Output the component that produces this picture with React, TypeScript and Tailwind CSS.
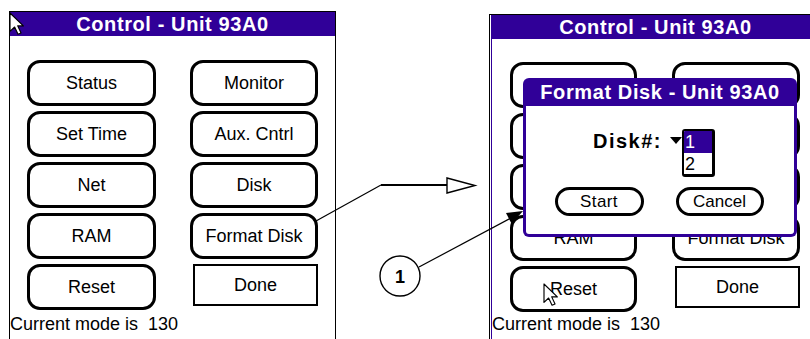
import React from 'react';

const leftLabels = ['Status', 'Set Time', 'Net', 'RAM', 'Reset'];
const rightLabels = ['Monitor', 'Aux. Cntrl', 'Disk', 'Format Disk'];

function PalmButton({ label, hidden }: { label: string; hidden?: boolean }) {
  return (
    <div
      className={`flex h-[46px] items-center justify-center rounded-[13px] border-[3px] border-black text-[18px] leading-none ${
        hidden ? 'text-transparent' : 'text-black'
      }`}
    >
      {label}
    </div>
  );
}

// covered: rows fully under the dialog on the second screen
function ButtonGrid({ wide, covered = 0 }: { wide: boolean; covered?: number }) {
  return (
    <div
      className={
        wide
          ? 'grid grid-cols-[129px_128px] gap-x-[34px] gap-y-[5px] px-[17px] pt-[24px]'
          : 'grid grid-cols-[127px_128px] gap-x-[35px] gap-y-[5px] px-[18px] pt-[23px]'
      }
    >
      {leftLabels.map((label, i) => (
        <React.Fragment key={label}>
          <PalmButton label={label} hidden={i < covered} />
          {i < 4 ? (
            <PalmButton label={rightLabels[i]} hidden={i < covered} />
          ) : (
            <div className="ml-[3px] flex h-[42px] items-center justify-center border-2 border-black text-[18px] leading-none text-black">
              Done
            </div>
          )}
        </React.Fragment>
      ))}
    </div>
  );
}

function TitleBar() {
  return (
    <div className="flex h-[24px] items-center justify-center bg-[#300098] text-[20px] font-bold leading-none tracking-[0.6px] text-white">
      Control - Unit 93A0
    </div>
  );
}

function StatusLine({ offset }: { offset: string }) {
  return <p className={`${offset} whitespace-pre text-[18px] leading-[22px] text-black`}>Current mode is  130</p>;
}

function FormatDialog() {
  return (
    <div className="absolute left-[33px] top-[63px] w-[274px]">
      <div className="flex h-[28px] items-center justify-center rounded-t-[6px] bg-[#300098] text-[20px] font-bold leading-none tracking-[0.6px] text-white">
        Format Disk - Unit 93A0
      </div>
      <div className="rounded-b-[6px] border-[3px] border-t-0 border-[#300098] bg-white pb-[18px] pt-[23px]">
        <div className="flex items-start pl-[67px]">
          <span className="text-[20px] font-bold leading-[24px] tracking-[1.5px] text-black">Disk#:</span>
          <svg className="ml-[8px] mt-[8px]" width="12" height="7" viewBox="0 0 12 7">
            <polygon points="0,0 12,0 6,7" fill="black" />
          </svg>
          <div className="flex h-[48px] w-[33px] flex-col overflow-hidden rounded-[3px] border-2 border-b-[3px] border-r-[3px] border-black text-[18px] leading-none">
            <div className="flex h-[22px] items-center bg-[#300098] pl-[1px] text-white">1</div>
            <div className="flex flex-1 items-center bg-white pl-[1px] text-black">2</div>
          </div>
        </div>
        <div className="mt-[10px] flex justify-center gap-[32px] pr-[2px]">
          <div className="flex h-[29px] w-[89px] items-center justify-center rounded-full border-[3px] border-black text-[17px] leading-none tracking-[0.4px] text-black">
            Start
          </div>
          <div className="flex h-[29px] w-[88px] items-center justify-center rounded-full border-[3px] border-black text-[17px] leading-none text-black">
            Cancel
          </div>
        </div>
      </div>
    </div>
  );
}

function Cursor({ x, y }: { x: number; y: number }) {
  return (
    <path
      transform={`translate(${x} ${y}) scale(1.15)`}
      d="M0 0 V16 L4 12.2 L7 18.5 L9.6 17.4 L6.7 11.2 H11.6 Z"
      fill="white"
      stroke="black"
      strokeWidth="1"
      strokeLinejoin="round"
    />
  );
}

export default function App() {
  return (
    <div
      className="relative flex h-[339px] w-[810px] items-start overflow-hidden bg-white"
      style={{ fontFamily: '"Liberation Sans", Arial, sans-serif' }}
    >
      <div className="ml-[9px] mt-[11px] h-[328px] w-[327px] shrink-0 border-l border-r border-t border-black">
        <TitleBar />
        <ButtonGrid wide />
        <StatusLine offset="mt-[3px] pl-0" />
      </div>

      <div className="relative ml-[153px] mt-[14px] h-[325px] w-[330px] shrink-0 border-l border-t border-black pl-[1px]">
        <div className="h-full border-l border-[#300098]">
          <TitleBar />
          <ButtonGrid wide={false} covered={3} />
          <StatusLine offset="mt-[1px] pl-0" />
        </div>
        <FormatDialog />
      </div>

      <svg className="pointer-events-none absolute left-0 top-0" width="810" height="339" viewBox="0 0 810 339">
        <line x1="316" y1="221" x2="381" y2="185" stroke="black" strokeWidth="1.2" />
        <line x1="381" y1="185" x2="448" y2="185" stroke="black" strokeWidth="2" />
        <polygon points="447,178 447,193 475,185.5" fill="white" stroke="black" strokeWidth="1.4" />
        <line x1="419" y1="267" x2="511" y2="218" stroke="black" strokeWidth="1.2" />
        <polygon points="523,211 511.6,223.7 506,213.1" fill="black" />
        <circle cx="400" cy="276" r="20" fill="white" stroke="black" strokeWidth="1.4" />
        <text x="400" y="283" textAnchor="middle" fontSize="18" fontWeight="bold" fontFamily="Liberation Sans, Arial, sans-serif">
          1
        </text>
        <Cursor x={10} y={13} />
        <Cursor x={544} y={284} />
      </svg>
    </div>
  );
}
